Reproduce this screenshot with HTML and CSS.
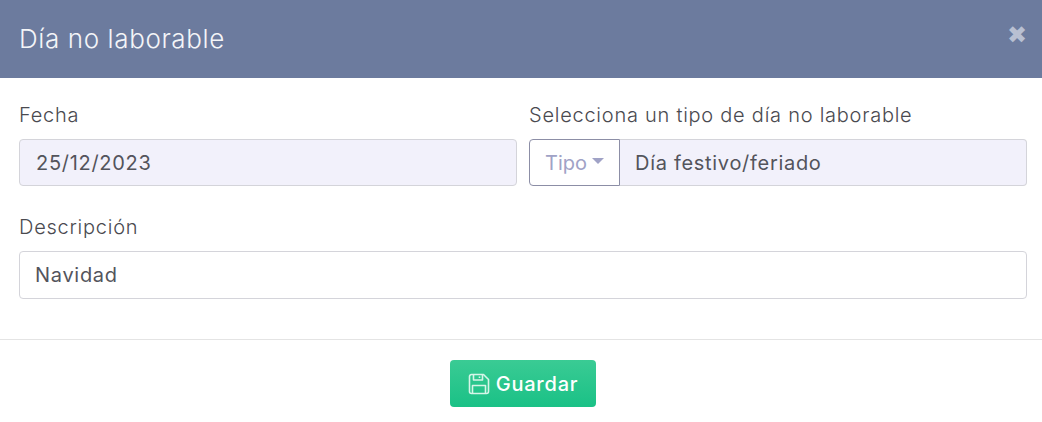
FILE: index.html

```html
<!DOCTYPE html>
<html lang="es">
<head>
  <meta charset="UTF-8">
  <title>Día no laborable</title>
  <link rel="stylesheet" href="styles.css">
</head>
<body>
  <div class="modal">
    <div class="modal-header">
      <h5 class="modal-title">Día no laborable</h5>
      <span class="close-x">✖</span>
    </div>
    <div class="modal-body">
      <div class="form-row">
        <div class="form-group">
          <label class="form-label">Fecha</label>
          <div class="form-control readonly">25/12/2023</div>
        </div>
        <div class="form-group">
          <label class="form-label">Selecciona un tipo de día no laborable</label>
          <div class="input-group">
            <div class="dropdown-btn">Tipo<span class="caret"></span></div>
            <div class="form-control readonly joined">Día festivo/feriado</div>
          </div>
        </div>
      </div>
      <div class="form-group">
        <label class="form-label">Descripción</label>
        <div class="form-control tall">Navidad</div>
      </div>
    </div>
    <div class="modal-footer">
      <button class="btn-save">
        <svg class="save-icon" viewBox="0 0 22 22" fill="none" stroke="currentColor" stroke-width="1.6" stroke-linejoin="round">
          <path d="M1.5 3.5a2 2 0 0 1 2-2h12l5 5v12a2 2 0 0 1-2 2h-15a2 2 0 0 1-2-2z"/>
          <path d="M5.5 1.5v5.500h9v-5.500"/>
          <path d="M11.500 3.500v1.500"/>
          <path d="M4.500 20.500v-8h13v8"/>
        </svg>
        Guardar
      </button>
    </div>
  </div>
</body>
</html>
```

FILE: styles.css

```css
* {
  box-sizing: border-box;
}
body {
  margin: 0;
  background: #fff;
  font-family: 'Inter', 'Liberation Sans', sans-serif;
  font-weight: 300;
  color: #495057;
}
.modal {
  width: 1042px;
}
.modal-header {
  height: 78px;
  background: #6c7b9e;
  display: flex;
  justify-content: space-between;
  padding: 0 15px 0 19px;
}
.modal-title {
  margin: 0;
  font-size: 26px;
  font-weight: 300;
  letter-spacing: 0.6px;
  color: #f4f5f8;
  line-height: 77px;
}
.close-x {
  color: #b9c0d2;
  font-family: 'DejaVu Sans', sans-serif;
  font-size: 24px;
  line-height: 70px;
}
.modal-body {
  padding: 24px 15px 40px 19px;
  border-bottom: 1px solid #e4e4e4;
  display: flex;
  flex-direction: column;
  gap: 28px;
}
.form-row {
  display: flex;
  gap: 12px;
}
.form-row .form-group {
  flex: 1;
}
.form-label {
  display: block;
  font-size: 20px;
  letter-spacing: 0.75px;
  line-height: 26px;
  margin-bottom: 11px;
  color: #4a4a50;
}
.form-control {
  height: 47px;
  border: 1px solid #d4d4da;
  border-radius: 4px;
  padding: 0 15px;
  font-size: 20px;
  font-weight: 400;
  letter-spacing: 0.7px;
  line-height: 46px;
  color: #53545c;
}
.form-control.tall {
  height: 48px;
}
.readonly {
  background: #f2f1fb;
  padding-left: 16px;
}
.input-group {
  display: flex;
}
.joined {
  flex: 1;
  border-left: 0;
  border-radius: 0 4px 4px 0;
  padding-left: 15px;
}
.dropdown-btn {
  width: 91px;
  height: 47px;
  border: 1px solid #8c8ea6;
  border-radius: 4px 0 0 4px;
  display: flex;
  align-items: center;
  justify-content: center;
  gap: 5px;
  font-size: 20px;
  font-weight: 400;
  color: #a0a2c6;
}
.caret {
  border-top: 6px solid #a0a2c6;
  border-left: 6px solid transparent;
  border-right: 6px solid transparent;
  margin-bottom: 3px;
}
.modal-footer {
  display: flex;
  justify-content: center;
  padding: 20px 0 0 4px;
}
.btn-save {
  width: 146px;
  height: 47px;
  border: 0;
  border-radius: 4px;
  background: linear-gradient(#3acb94, #1ac186);
  color: #fff;
  font-family: inherit;
  font-size: 20px;
  font-weight: 500;
  letter-spacing: 0.8px;
  display: flex;
  align-items: center;
  justify-content: center;
  gap: 6px;
  padding: 0;
}
.save-icon {
  width: 22px;
  height: 22px;
  color: #d6f5e8;
}
```
